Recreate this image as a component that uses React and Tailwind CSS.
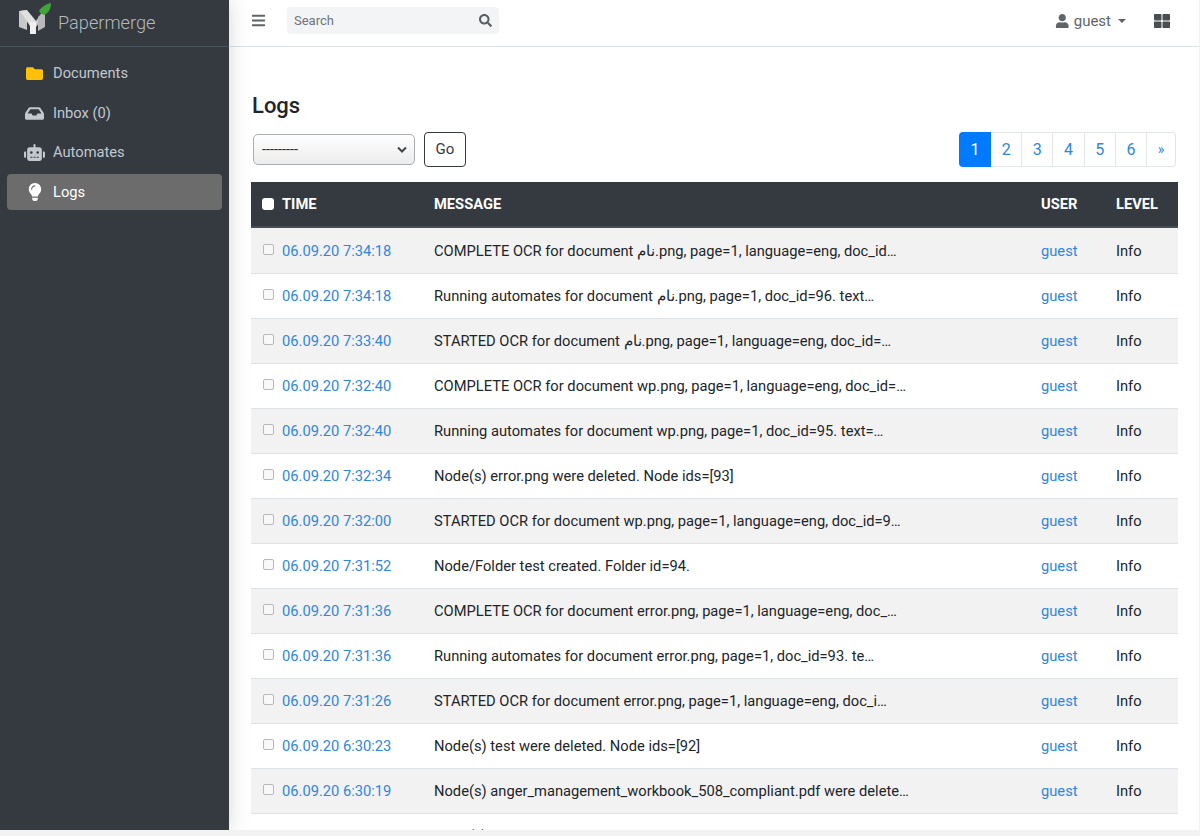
import React from "react";
import { FaFolder, FaInbox, FaRobot, FaLightbulb, FaBars, FaSearch, FaUser, FaThLarge } from "react-icons/fa";

const rows = [
  ["06.09.20 7:34:18", "COMPLETE OCR for document نام.png, page=1, language=eng, doc_id…"],
  ["06.09.20 7:34:18", "Running automates for document نام.png, page=1, doc_id=96. text…"],
  ["06.09.20 7:33:40", "STARTED OCR for document نام.png, page=1, language=eng, doc_id=…"],
  ["06.09.20 7:32:40", "COMPLETE OCR for document wp.png, page=1, language=eng, doc_id=…"],
  ["06.09.20 7:32:40", "Running automates for document wp.png, page=1, doc_id=95. text=…"],
  ["06.09.20 7:32:34", "Node(s) error.png were deleted. Node ids=[93]"],
  ["06.09.20 7:32:00", "STARTED OCR for document wp.png, page=1, language=eng, doc_id=9…"],
  ["06.09.20 7:31:52", "Node/Folder test created. Folder id=94."],
  ["06.09.20 7:31:36", "COMPLETE OCR for document error.png, page=1, language=eng, doc_…"],
  ["06.09.20 7:31:36", "Running automates for document error.png, page=1, doc_id=93. te…"],
  ["06.09.20 7:31:26", "STARTED OCR for document error.png, page=1, language=eng, doc_i…"],
  ["06.09.20 6:30:23", "Node(s) test were deleted. Node ids=[92]"],
  ["06.09.20 6:30:19", "Node(s) anger_management_workbook_508_compliant.pdf were delete…"],
  ["", "Node(s)"],
];

function NavItem({ icon, label, active }) {
  return (
    <div className={`flex items-center h-[36px] mx-[7px] mt-[3.5px] rounded-[4px] pl-[18px] ${active ? "bg-[#6c6c6c] text-white" : "text-[#c2c7d0]"}`}>
      <span className="w-[28px] flex justify-start text-[17px]">{icon}</span>
      <span className="text-[14.7px]">{label}</span>
    </div>
  );
}

function Logo() {
  return (
    <svg width="34" height="36" viewBox="0 0 34 36" className="ml-[18px] -mt-[10px]">
      <path d="M1 11 L9 10 L9 30 L1 27 Z" fill="#c8c8c8" />
      <path d="M2 11 L9 10 L18 21 L18 26 L12 26 Z" fill="#e0e0e0" />
      <path d="M12 22 L18 22 L18 34 L12 34 Z" fill="#f0f0f0" />
      <path d="M18 21 L25 11 L27 11 L27 15 L18 27 Z" fill="#cfcfcf" />
      <path d="M20 17 L27 11 L27 27 L20 31 Z" fill="#b8b8b8" />
      <path d="M21 11 C23 7 28 4 33 3 C33 8 31 13 26 15 C24 14 22 13 21 11 Z" fill="#3fa535" />
    </svg>
  );
}

export default function App() {
  return (
    <div className="h-[836px] w-[1200px] overflow-hidden bg-[#f2f2f2] font-['Roboto',sans-serif]">
      <div className="flex h-[830px] overflow-hidden">
        <aside className="w-[229px] shrink-0 bg-[#343a40] z-10 shadow-[0_0_20px_rgba(0,0,0,0.16)]">
          <div className="flex items-center h-[47px] pb-[1px] border-b border-[#4b545c]">
            <Logo />
            <span className="ml-[6px] text-[18.2px] text-[#b5b9bd] font-light">Papermerge</span>
          </div>
          <div className="pt-[5px] flex flex-col">
            <NavItem icon={<FaFolder className="ml-[1px] text-[#ffc107]" />} label="Documents" />
            <NavItem icon={<FaInbox className="text-[19px]" />} label="Inbox (0)" />
            <NavItem icon={<FaRobot className="-ml-[1px] text-[21px]" />} label="Automates" />
            <NavItem active icon={<FaLightbulb className="ml-[1px] text-[18px]" />} label="Logs" />
          </div>
        </aside>
        <div className="flex-1 min-w-0 bg-white border-r border-[#f2f2f2]">
          <header className="flex items-center h-[47px] pb-[5px] border-b border-[#dee2e6] pl-[22px] pr-[29px] text-[#5f6468]">
            <FaBars className="text-[15px]" />
            <div className="ml-[21px] flex items-center justify-between w-[212px] h-[27px] rounded-[4px] bg-[#f2f4f6] pl-[7px] pr-[7px]">
              <span className="text-[13px] mt-[1px] text-[#6c757d]">Search</span>
              <FaSearch className="text-[13px] text-[#5a5f63]" />
            </div>
            <div className="ml-auto mt-[1px] flex items-center text-[15px]">
              <FaUser className="text-[14.5px] mr-[4px]" />
              <span>guest</span>
              <span className="ml-[7px] w-0 h-0 border-x-[4px] border-x-transparent border-t-[4px] border-t-[#5f6468]" />
            </div>
            <FaThLarge className="ml-[28px] text-[16px] text-[#4a4e52]" />
          </header>
          <main className="pl-[22px] pr-[21px]">
            <h1 className="mt-[46px] pl-[1px] text-[22px] leading-[26px] font-medium text-[#212529]">Logs</h1>
            <div className="mt-[13px] flex items-center justify-between pr-[2px]">
              <div className="flex items-center">
                <div className="ml-[2px] flex items-center justify-between w-[162px] h-[31px] rounded-[5px] border border-[#a9adb1] bg-gradient-to-b from-white to-[#ececec] pl-[8px] pr-[6px] text-[14.5px] text-[#333]">
                  <span>---------</span>
                  <svg width="12" height="8" viewBox="0 0 12 8" fill="none" stroke="#444" strokeWidth="2"><path d="M2 1.5 L6 5.5 L10 1.5" /></svg>
                </div>
                <button className="ml-[9px] w-[42px] h-[35px] rounded-[4px] border border-[#343a40] bg-white text-[15px] text-[#343a40]">Go</button>
              </div>
              <div className="flex h-[35px] text-[16px] text-[#2e86de]">
                <span className="w-[32px] flex items-center justify-center bg-[#007bff] text-white rounded-l-[4px]">1</span>
                {["2", "3", "4", "5", "6"].map((n) => (
                  <span key={n} className="w-[31.2px] flex items-center justify-center border border-l-0 border-[#e3e6e9]">{n}</span>
                ))}
                <span className="w-[29px] flex items-center justify-center border border-l-0 border-[#e3e6e9] rounded-r-[4px] text-[14px]">»</span>
              </div>
            </div>
            <table className="mt-[15px] w-[927px] table-fixed border-collapse text-[14.7px] text-[#212529]">
              <thead>
                <tr className="h-[45px] bg-[#343a40] text-white text-left border-b-2 border-[#454d55]">
                  <th className="w-[171px] pl-[11px] pt-[1px] font-bold">
                    <div className="flex items-center">
                      <span className="w-[12px] h-[12px] rounded-[3px] bg-white mr-[8px]" />TIME
                    </div>
                  </th>
                  <th className="w-[607px] pl-[12px] pt-[1px] font-bold">MESSAGE</th>
                  <th className="w-[75px] pl-[12px] pt-[1px] font-bold">USER</th>
                  <th className="pl-[12px] pt-[1px] font-bold">LEVEL</th>
                </tr>
              </thead>
              <tbody>
                {rows.map(([t, m], i) => (
                  <tr key={i} className={`border-b border-[#dee2e6] ${i === 0 ? "h-[46px]" : "h-[45px]"} ${i % 2 === 0 ? "bg-[#f2f2f2]" : "bg-white"}`}>
                    <td className="pl-[12px] pt-[2px]">
                      <div className="flex items-center">
                        <span className="w-[11px] h-[11px] -mt-[3px] rounded-[2px] border border-[#b9b9b9] bg-[#f8f8f8] mr-[8px]" />
                        <span className="text-[#2e86de]">{t}</span>
                      </div>
                    </td>
                    <td className="pl-[12px] pt-[2px] whitespace-nowrap overflow-hidden">{m}</td>
                    <td className={`pl-[12px] pt-[2px] text-[#2e86de] ${i === 13 ? "invisible" : ""}`}>guest</td>
                    <td className={`pl-[12px] pt-[2px] ${i === 13 ? "invisible" : ""}`}>Info</td>
                  </tr>
                ))}
              </tbody>
            </table>
          </main>
        </div>
      </div>
    </div>
  );
}
